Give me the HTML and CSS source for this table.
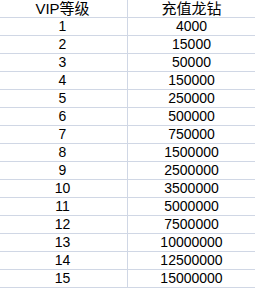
FILE: index.html
```html
<!DOCTYPE html>
<html>
<head>
<meta charset="utf-8">
<link rel="stylesheet" href="styles.css">
</head>
<body>
<div class="sheet">
  <div class="cell lvl head">VIP等级</div><div class="cell amt head">充值龙钻</div>
  <div class="cell lvl">1</div><div class="cell amt">4000</div>
  <div class="cell lvl">2</div><div class="cell amt">15000</div>
  <div class="cell lvl">3</div><div class="cell amt">50000</div>
  <div class="cell lvl">4</div><div class="cell amt">150000</div>
  <div class="cell lvl">5</div><div class="cell amt">250000</div>
  <div class="cell lvl">6</div><div class="cell amt">500000</div>
  <div class="cell lvl">7</div><div class="cell amt">750000</div>
  <div class="cell lvl">8</div><div class="cell amt">1500000</div>
  <div class="cell lvl">9</div><div class="cell amt">2500000</div>
  <div class="cell lvl">10</div><div class="cell amt">3500000</div>
  <div class="cell lvl">11</div><div class="cell amt">5000000</div>
  <div class="cell lvl">12</div><div class="cell amt">7500000</div>
  <div class="cell lvl">13</div><div class="cell amt">10000000</div>
  <div class="cell lvl">14</div><div class="cell amt">12500000</div>
  <div class="cell lvl">15</div><div class="cell amt">15000000</div>
</div>
</body>
</html>
```

FILE: styles.css
```css
html, body {
  margin: 0;
  padding: 0;
  background: #ffffff;
}
.sheet {
  display: grid;
  grid-template-columns: 128px 127px;
  grid-auto-rows: 18px;
  font-family: "Liberation Sans", "Noto Sans CJK SC", sans-serif;
  font-size: 14px;
  color: #000000;
}
.cell {
  box-sizing: border-box;
  border-bottom: 1px solid #d0d7e5;
  display: flex;
  align-items: center;
  justify-content: center;
  line-height: 17px;
  white-space: nowrap;
}
.lvl {
  border-right: 1px solid #d0d7e5;
  padding-right: 2px;
}
.amt {
  padding-right: 0;
}
.head {
  font-size: 15px;
}
```
